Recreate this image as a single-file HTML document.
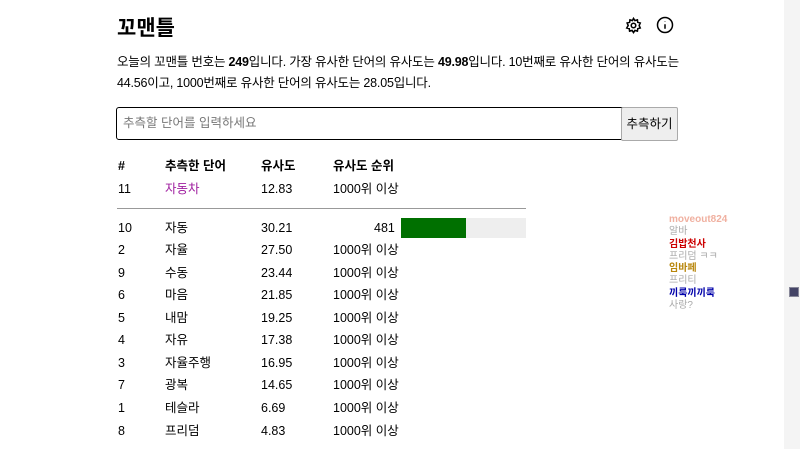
<!DOCTYPE html><html><head><meta charset="utf-8"><style>
body{margin:0;width:800px;height:449px;overflow:hidden;background:#fff;font-family:"Liberation Sans","Noto Sans CJK KR",sans-serif;color:#000;position:relative}
.a{position:absolute;white-space:nowrap}
h1{position:absolute;left:117px;top:12px;margin:0;font-size:21px;font-weight:bold}
.p{position:absolute;left:117px;top:52px;font-size:12.5px;line-height:21px;width:600px;letter-spacing:-0.2px}
.in{position:absolute;left:116px;top:107px;width:501px;height:31px;border:1.5px solid #000;border-radius:3px;font-size:12.5px;color:#777;line-height:31px;padding-left:6px}
.bt{position:absolute;left:621px;top:107px;width:55px;height:32px;border:1px solid #aaa;background:#eee;font-size:12.5px;line-height:32px;text-align:center;border-radius:2px}
.r{position:absolute;left:118px;font-size:12.5px;height:20px;line-height:20px}
.r span{position:absolute;white-space:nowrap}
.c1{left:0}.c2{left:47px}.c3{left:143px}.c4{left:215px}
.side{position:absolute;left:669px;top:214px;font-size:10px;line-height:12.3px}
</style></head><body>
<h1>꼬맨틀</h1>
<svg class="a" style="left:625px;top:17px" width="17" height="17" viewBox="0 0 24 24" fill="none" stroke="#000" stroke-width="2.2"><circle cx="12" cy="12" r="3.2"/><path d="M12 2l2 3 3.5-1 .5 3.5 3.5 1-1.5 3.5 1.5 3.5-3.5 1-.5 3.5-3.5-1-2 3-2-3-3.5 1-.5-3.5-3.5-1L4.5 12 3 8.5l3.5-1L7 4l3.5 1z"/></svg>
<svg class="a" style="left:656px;top:16px" width="18" height="18" viewBox="0 0 24 24" fill="none" stroke="#000" stroke-width="2"><circle cx="12" cy="12" r="10"/><path d="M12 11v6M12 7v.5"/></svg>
<div class="p">오늘의 꼬맨틀 번호는 <b>249</b>입니다. 가장 유사한 단어의 유사도는 <b>49.98</b>입니다. 10번째로 유사한 단어의 유사도는<br>44.56이고, 1000번째로 유사한 단어의 유사도는 28.05입니다.</div>
<div class="in">추측할 단어를 입력하세요</div>
<div class="bt">추측하기</div>
<div class="r" style="top:156px;font-weight:bold"><span class="c1">#</span><span class="c2">추측한 단어</span><span class="c3">유사도</span><span class="c4">유사도 순위</span></div>
<div class="r" style="top:179px"><span class="c1">11</span><span class="c2" style="color:#a020a0">자동차</span><span class="c3">12.83</span><span class="c4">1000위 이상</span></div>
<div class="a" style="left:117px;top:208px;width:409px;height:1px;background:#999"></div>
<div class="r" style="top:218px"><span class="c1">10</span><span class="c2">자동</span><span class="c3">30.21</span><span style="left:256px">481</span></div>
<div class="a" style="left:401px;top:218px;width:125px;height:20px;background:#eee"><div style="width:65px;height:20px;background:#007000"></div></div>
<div class="r" style="top:240px"><span class="c1">2</span><span class="c2">자율</span><span class="c3">27.50</span><span class="c4">1000위 이상</span></div>
<div class="r" style="top:263px"><span class="c1">9</span><span class="c2">수동</span><span class="c3">23.44</span><span class="c4">1000위 이상</span></div>
<div class="r" style="top:285px"><span class="c1">6</span><span class="c2">마음</span><span class="c3">21.85</span><span class="c4">1000위 이상</span></div>
<div class="r" style="top:308px"><span class="c1">5</span><span class="c2">내맘</span><span class="c3">19.25</span><span class="c4">1000위 이상</span></div>
<div class="r" style="top:330px"><span class="c1">4</span><span class="c2">자유</span><span class="c3">17.38</span><span class="c4">1000위 이상</span></div>
<div class="r" style="top:353px"><span class="c1">3</span><span class="c2">자율주행</span><span class="c3">16.95</span><span class="c4">1000위 이상</span></div>
<div class="r" style="top:375px"><span class="c1">7</span><span class="c2">광복</span><span class="c3">14.65</span><span class="c4">1000위 이상</span></div>
<div class="r" style="top:398px"><span class="c1">1</span><span class="c2">테슬라</span><span class="c3">6.69</span><span class="c4">1000위 이상</span></div>
<div class="r" style="top:421px"><span class="c1">8</span><span class="c2">프리덤</span><span class="c3">4.83</span><span class="c4">1000위 이상</span></div>
<div class="side">
<div style="color:#f0b0a0;font-weight:bold">moveout824</div><div style="color:#aaa">알바</div>
<div style="color:#c00;font-weight:bold">김밥천사</div><div style="color:#aaa">프리덤 ㅋㅋ</div>
<div style="color:#b8860b;font-weight:bold">임바페</div><div style="color:#aaa">프리티</div>
<div style="color:#00a;font-weight:bold">끼룩끼끼룩</div><div style="color:#aaa">사랑?</div>
</div>
<div class="a" style="left:784px;top:0;width:16px;height:449px;background:#f4f4f4"></div>
<div class="a" style="left:789px;top:287px;width:8px;height:8px;background:#446;border:1px solid #889"></div>
</body></html>
